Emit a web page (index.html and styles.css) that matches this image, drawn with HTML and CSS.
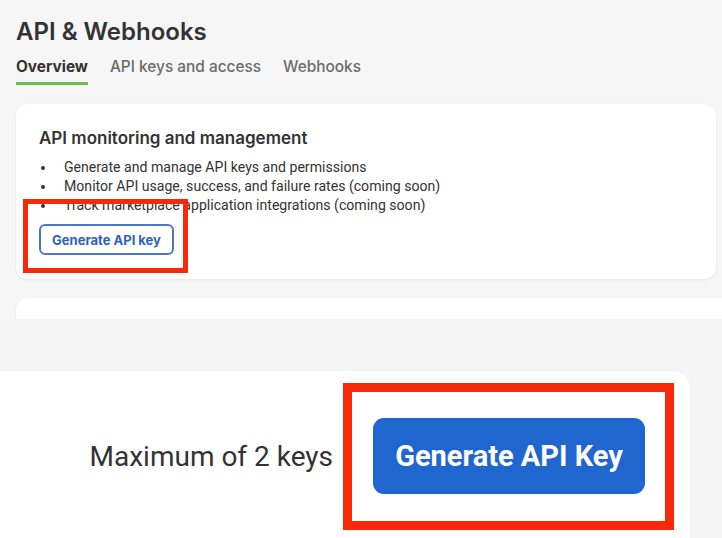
FILE: index.html
```html
<!DOCTYPE html>
<html lang="en">
<head>
    <meta charset="UTF-8">
    <meta name="viewport" content="width=device-width, initial-scale=1.0">
    <title>API &amp; Webhooks</title>
    <link rel="stylesheet" href="styles.css">
</head>
<body>
    <!-- Shot 1: the overview page -->
    <div class="shot shot-page">
        <h1 class="page-title">API &amp; Webhooks</h1>

        <div class="tabs">
            <div class="tab active">Overview</div>
            <div class="tab">API keys and access</div>
            <div class="tab">Webhooks</div>
        </div>

        <div class="card">
            <h2 class="card-title">API monitoring and management</h2>
            <ul class="feature-list">
                <li>Generate and manage API keys and permissions</li>
                <li>Monitor API usage, success, and failure rates (coming soon)</li>
                <li>Track marketplace application integrations (coming soon)</li>
            </ul>
            <div class="mark-wrap">
                <button class="btn-outline">Generate API key</button>
                <div class="mark mark-small"></div>
            </div>
        </div>

        <div class="card card-next"></div>
    </div>

    <!-- Shot 2: close-up of the keys page -->
    <div class="shot shot-zoom">
        <div class="card card-big">
            <div class="keys-row">
                <span class="keys-limit">Maximum of 2 keys</span>
                <div class="mark-wrap">
                    <button class="btn-primary">Generate API Key</button>
                    <div class="mark mark-big"></div>
                </div>
            </div>
        </div>
    </div>
</body>
</html>
```

FILE: styles.css
```css
body {
    margin: 0;
    background-color: #f6f6f6;
    font-family: Inter, "Noto Sans", sans-serif;
    color: #333;
}

.shot {
    overflow: hidden;
}

.shot-page {
    height: 319px;
    box-sizing: border-box;
    padding: 18px 0 0 16px;
}

.page-title {
    margin: 0;
    font-size: 24px;
    line-height: 28px;
    font-weight: 600;
    color: #333;
}

.tabs {
    display: flex;
    gap: 22px;
    margin-top: 11px;
}

.tab {
    font-size: 15.4px;
    line-height: 20px;
    font-weight: 500;
    color: #6b6b6b;
    padding-bottom: 5px;
    border-bottom: 3px solid transparent;
}

.tab.active {
    font-weight: 700;
    color: #333;
    border-bottom-color: #6cbf4c;
}

.card {
    background: white;
    border-radius: 12px;
    box-shadow: 0 1px 3px rgba(0,0,0,0.07);
}

.shot-page .card {
    margin-top: 19px;
    margin-right: 6px;
    padding: 23px 23px 24px;
}

.shot-page .card-next {
    margin-right: -20px;
    height: 60px;
}

.card-title {
    margin: 0;
    font-size: 17px;
    line-height: 22px;
    font-weight: 600;
    color: #333;
}

.feature-list {
    margin: 9px 0 9px;
    padding-left: 17px;
    font-family: Roboto, "Liberation Sans", sans-serif;
    font-size: 14.1px;
    line-height: 19px;
    color: #333;
}

.feature-list li {
    padding-left: 8px;
}

.mark-wrap {
    position: relative;
    display: inline-block;
}

.btn-outline {
    display: block;
    width: 135px;
    height: 31px;
    background: white;
    border: 2px solid #4a78c6;
    border-radius: 6px;
    color: #2c62c0;
    font-family: Inter, sans-serif;
    font-size: 13px;
    font-weight: 700;
    cursor: pointer;
}

/* red highlight boxes drawn over the screenshot */
.mark {
    position: absolute;
    border-style: solid;
    border-color: #f7290b;
    pointer-events: none;
}

.mark-small {
    top: -25px;
    left: -16px;
    right: -14px;
    bottom: -18px;
    border-width: 5px;
}

.mark-big {
    top: -35px;
    left: -30px;
    right: -29px;
    bottom: -36px;
    border-width: 9px;
}

.shot-zoom {
    height: 219px;
    box-sizing: border-box;
    padding-top: 52px;
    background-color: #f5f5f5;
}

.card-big {
    margin-left: -20px;
    width: 710px;
    height: 200px;
    border-radius: 16px;
    box-sizing: border-box;
    padding: 47px 45px 0 0;
}

.keys-row {
    display: flex;
    justify-content: flex-end;
    align-items: center;
    gap: 40px;
}

.keys-limit {
    font-family: Roboto, "Liberation Sans", sans-serif;
    font-size: 28px;
    color: #333;
}

.btn-primary {
    display: block;
    width: 272px;
    height: 76px;
    background: #1f66cf;
    border: none;
    border-radius: 11px;
    color: white;
    font-family: Roboto, "Liberation Sans", sans-serif;
    font-size: 29px;
    font-weight: 700;
    cursor: pointer;
}
```
